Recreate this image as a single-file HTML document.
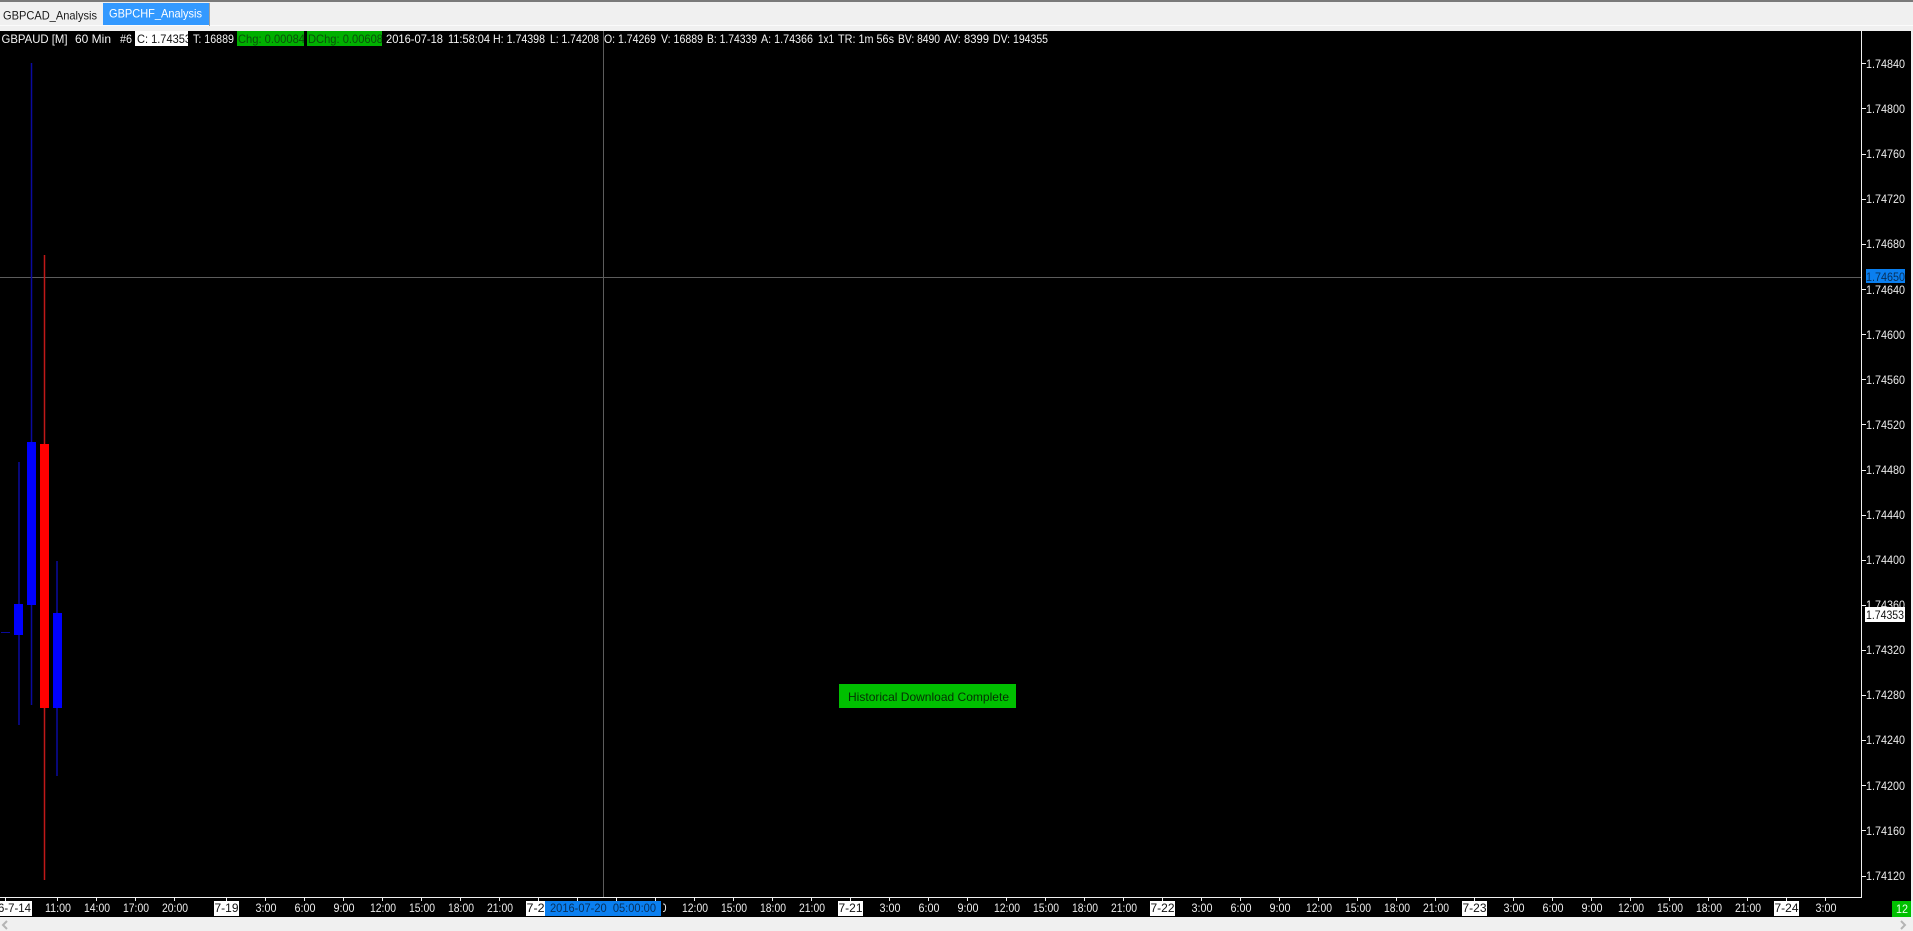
<!DOCTYPE html>
<html lang="en">
<head>
<meta charset="utf-8">
<title>GBPAUD Chart</title>
<style>
html,body{margin:0;padding:0;background:#f0f0f0;width:1913px;height:931px;overflow:hidden}
svg{display:block;position:absolute;left:0;top:0}
text{font-family:"Liberation Sans",sans-serif;font-size:12px;white-space:pre}
</style>
</head>
<body>
<svg width="1913" height="931" viewBox="0 0 1913 931" xmlns="http://www.w3.org/2000/svg">
<rect width="1913" height="931" fill="#f0f0f0"/>
<rect width="1913" height="2" fill="#7a7a7a"/>
<rect y="25" width="1913" height="1" fill="#fbfbfb"/>
<rect x="103" y="3" width="106" height="22" fill="#3399ff"/>
<rect x="209" y="3" width="1" height="23" fill="#a0a0a0"/>
<text x="3" y="19.500" textLength="94" lengthAdjust="spacingAndGlyphs" fill="#1a1a1a">GBPCAD_Analysis</text>
<text x="109" y="17.500" textLength="93" lengthAdjust="spacingAndGlyphs" fill="#ffffff">GBPCHF_Analysis</text>

<rect y="31" width="1911" height="886" fill="#000"/>

<!-- crosshair -->
<rect x="603" y="31" width="1" height="866" fill="#5c5c5c"/>
<rect x="0" y="277" width="1861" height="1" fill="#5c5c5c"/>

<!-- candles -->
<g>
<rect x="1" y="632" width="9" height="1" fill="#0a0a9a"/>
<rect x="18.250" y="462" width="1.500" height="263" fill="#0a0aa0"/>
<rect x="14" y="604" width="9" height="31" fill="#0000ff"/>
<rect x="30.750" y="63" width="1.500" height="642" fill="#0a0aa0"/>
<rect x="27" y="442" width="9" height="163" fill="#0000ff"/>
<rect x="43.750" y="255" width="1.500" height="625" fill="#c01818"/>
<rect x="40" y="444" width="9" height="264" fill="#ff0000"/>
<rect x="56.250" y="561" width="1.500" height="215" fill="#0a0aa0"/>
<rect x="53" y="613" width="9" height="95" fill="#0000ff"/>
</g>

<!-- header strip -->
<rect x="135" y="31" width="53" height="15" fill="#ffffff"/>
<rect x="237" y="31" width="67" height="15" fill="#00b000"/>
<rect x="307" y="31" width="75" height="15" fill="#00b000"/>
<g fill="#f4f4f4">
<text x="1.500" y="43" textLength="66" lengthAdjust="spacingAndGlyphs">GBPAUD [M]</text>
<text x="75" y="43" textLength="36" lengthAdjust="spacingAndGlyphs">60 Min</text>
<text x="120" y="43" textLength="12" lengthAdjust="spacingAndGlyphs">#6</text>
<text x="193" y="43" textLength="41" lengthAdjust="spacingAndGlyphs">T: 16889</text>
<text x="386" y="43" textLength="57" lengthAdjust="spacingAndGlyphs">2016-07-18</text>
<text x="448" y="43" textLength="42" lengthAdjust="spacingAndGlyphs">11:58:04</text>
<text x="493" y="43" textLength="52" lengthAdjust="spacingAndGlyphs">H: 1.74398</text>
<text x="550" y="43" textLength="49" lengthAdjust="spacingAndGlyphs">L: 1.74208</text>
<text x="604" y="43" textLength="52" lengthAdjust="spacingAndGlyphs">O: 1.74269</text>
<text x="661" y="43" textLength="42" lengthAdjust="spacingAndGlyphs">V: 16889</text>
<text x="707" y="43" textLength="50" lengthAdjust="spacingAndGlyphs">B: 1.74339</text>
<text x="761" y="43" textLength="52" lengthAdjust="spacingAndGlyphs">A: 1.74366</text>
<text x="818" y="43" textLength="16" lengthAdjust="spacingAndGlyphs">1x1</text>
<text x="838" y="43" textLength="56" lengthAdjust="spacingAndGlyphs">TR: 1m 56s</text>
<text x="898" y="43" textLength="42" lengthAdjust="spacingAndGlyphs">BV: 8490</text>
<text x="944" y="43" textLength="45" lengthAdjust="spacingAndGlyphs">AV: 8399</text>
<text x="993" y="43" textLength="55" lengthAdjust="spacingAndGlyphs">DV: 194355</text>
</g>
<text x="137" y="43" textLength="54" lengthAdjust="spacingAndGlyphs" fill="#111">C: 1.74353</text>
<rect x="188" y="31" width="4" height="15" fill="#000"/>
<text x="238" y="43" textLength="67" lengthAdjust="spacingAndGlyphs" fill="#0a500a">Chg: 0.00084</text>
<rect x="304" y="31" width="3" height="15" fill="#000"/>
<text x="308" y="43" textLength="75" lengthAdjust="spacingAndGlyphs" fill="#0a500a">DChg: 0.00608</text>
<rect x="382" y="31" width="4" height="15" fill="#000"/>

<!-- axes -->
<rect x="1861" y="31" width="1" height="867" fill="#f0f0f0"/>
<rect x="0" y="897" width="1862" height="1" fill="#f0f0f0"/>
<g fill="#f0f0f0">
<rect x="1862" y="63" width="4" height="1"/><rect x="1862" y="108" width="4" height="1"/><rect x="1862" y="154" width="4" height="1"/><rect x="1862" y="199" width="4" height="1"/><rect x="1862" y="244" width="4" height="1"/><rect x="1862" y="289" width="4" height="1"/><rect x="1862" y="334" width="4" height="1"/><rect x="1862" y="379" width="4" height="1"/><rect x="1862" y="424" width="4" height="1"/><rect x="1862" y="470" width="4" height="1"/><rect x="1862" y="515" width="4" height="1"/><rect x="1862" y="560" width="4" height="1"/><rect x="1862" y="605" width="4" height="1"/><rect x="1862" y="650" width="4" height="1"/><rect x="1862" y="695" width="4" height="1"/><rect x="1862" y="740" width="4" height="1"/><rect x="1862" y="785" width="4" height="1"/><rect x="1862" y="830" width="4" height="1"/><rect x="1862" y="876" width="4" height="1"/>
</g>
<g fill="#ececec">
<text x="1866" y="68" textLength="39" lengthAdjust="spacingAndGlyphs">1.74840</text>
<text x="1866" y="113" textLength="39" lengthAdjust="spacingAndGlyphs">1.74800</text>
<text x="1866" y="158" textLength="39" lengthAdjust="spacingAndGlyphs">1.74760</text>
<text x="1866" y="203" textLength="39" lengthAdjust="spacingAndGlyphs">1.74720</text>
<text x="1866" y="248" textLength="39" lengthAdjust="spacingAndGlyphs">1.74680</text>
<text x="1866" y="294" textLength="39" lengthAdjust="spacingAndGlyphs">1.74640</text>
<text x="1866" y="339" textLength="39" lengthAdjust="spacingAndGlyphs">1.74600</text>
<text x="1866" y="384" textLength="39" lengthAdjust="spacingAndGlyphs">1.74560</text>
<text x="1866" y="429" textLength="39" lengthAdjust="spacingAndGlyphs">1.74520</text>
<text x="1866" y="474" textLength="39" lengthAdjust="spacingAndGlyphs">1.74480</text>
<text x="1866" y="519" textLength="39" lengthAdjust="spacingAndGlyphs">1.74440</text>
<text x="1866" y="564" textLength="39" lengthAdjust="spacingAndGlyphs">1.74400</text>
<text x="1866" y="609" textLength="39" lengthAdjust="spacingAndGlyphs">1.74360</text>
<text x="1866" y="654" textLength="39" lengthAdjust="spacingAndGlyphs">1.74320</text>
<text x="1866" y="699" textLength="39" lengthAdjust="spacingAndGlyphs">1.74280</text>
<text x="1866" y="744" textLength="39" lengthAdjust="spacingAndGlyphs">1.74240</text>
<text x="1866" y="790" textLength="39" lengthAdjust="spacingAndGlyphs">1.74200</text>
<text x="1866" y="835" textLength="39" lengthAdjust="spacingAndGlyphs">1.74160</text>
<text x="1866" y="880" textLength="39" lengthAdjust="spacingAndGlyphs">1.74120</text>
</g>
<rect x="1866" y="269" width="39" height="14" fill="#0a7ff0"/>
<text x="1866" y="281" textLength="39" lengthAdjust="spacingAndGlyphs" fill="#08305a">1.74650</text>
<rect x="1865" y="607" width="40" height="15" fill="#ffffff"/>
<text x="1866" y="619" textLength="38" lengthAdjust="spacingAndGlyphs" fill="#111">1.74353</text>

<!-- bottom ticks -->
<g fill="#f0f0f0">
<rect x="5" y="898" width="1" height="3"/><rect x="57" y="898" width="1" height="3"/><rect x="96" y="898" width="1" height="3"/><rect x="135" y="898" width="1" height="3"/><rect x="174" y="898" width="1" height="3"/><rect x="226" y="898" width="1" height="3"/><rect x="265" y="898" width="1" height="3"/><rect x="304" y="898" width="1" height="3"/><rect x="343" y="898" width="1" height="3"/><rect x="382" y="898" width="1" height="3"/><rect x="421" y="898" width="1" height="3"/><rect x="460" y="898" width="1" height="3"/><rect x="499" y="898" width="1" height="3"/><rect x="538" y="898" width="1" height="3"/><rect x="577" y="898" width="1" height="3"/><rect x="616" y="898" width="1" height="3"/><rect x="655" y="898" width="1" height="3"/><rect x="694" y="898" width="1" height="3"/><rect x="733" y="898" width="1" height="3"/><rect x="772" y="898" width="1" height="3"/><rect x="811" y="898" width="1" height="3"/><rect x="850" y="898" width="1" height="3"/><rect x="889" y="898" width="1" height="3"/><rect x="928" y="898" width="1" height="3"/><rect x="967" y="898" width="1" height="3"/><rect x="1006" y="898" width="1" height="3"/><rect x="1045" y="898" width="1" height="3"/><rect x="1084" y="898" width="1" height="3"/><rect x="1123" y="898" width="1" height="3"/><rect x="1162" y="898" width="1" height="3"/><rect x="1201" y="898" width="1" height="3"/><rect x="1240" y="898" width="1" height="3"/><rect x="1279" y="898" width="1" height="3"/><rect x="1318" y="898" width="1" height="3"/><rect x="1357" y="898" width="1" height="3"/><rect x="1396" y="898" width="1" height="3"/><rect x="1435" y="898" width="1" height="3"/><rect x="1474" y="898" width="1" height="3"/><rect x="1513" y="898" width="1" height="3"/><rect x="1552" y="898" width="1" height="3"/><rect x="1591" y="898" width="1" height="3"/><rect x="1630" y="898" width="1" height="3"/><rect x="1669" y="898" width="1" height="3"/><rect x="1708" y="898" width="1" height="3"/><rect x="1747" y="898" width="1" height="3"/><rect x="1786" y="898" width="1" height="3"/><rect x="1825" y="898" width="1" height="3"/>
</g>

<!-- date boxes -->
<g fill="#ffffff">
<rect x="0" y="901" width="32" height="15"/>
<rect x="214" y="901" width="25" height="15"/>
<rect x="526" y="901" width="25" height="15"/>
<rect x="838" y="901" width="25" height="15"/>
<rect x="1150" y="901" width="25" height="15"/>
<rect x="1462" y="901" width="25" height="15"/>
<rect x="1774" y="901" width="25" height="15"/>
</g>
<g fill="#111" text-anchor="middle">
<text x="5" y="912" textLength="52" lengthAdjust="spacingAndGlyphs">2016-7-14</text>
<text x="226.500" y="912" textLength="24" lengthAdjust="spacingAndGlyphs">7-19</text>
<text x="539" y="912" textLength="25" lengthAdjust="spacingAndGlyphs">7-20</text>
<text x="850.500" y="912" textLength="24" lengthAdjust="spacingAndGlyphs">7-21</text>
<text x="1162.500" y="912" textLength="24" lengthAdjust="spacingAndGlyphs">7-22</text>
<text x="1474.500" y="912" textLength="24" lengthAdjust="spacingAndGlyphs">7-23</text>
<text x="1786.500" y="912" textLength="24" lengthAdjust="spacingAndGlyphs">7-24</text>
</g>
<g fill="#ececec" text-anchor="middle">
<text x="58" y="912" textLength="26" lengthAdjust="spacingAndGlyphs">11:00</text>
<text x="97" y="912" textLength="26" lengthAdjust="spacingAndGlyphs">14:00</text>
<text x="136" y="912" textLength="26" lengthAdjust="spacingAndGlyphs">17:00</text>
<text x="175" y="912" textLength="26" lengthAdjust="spacingAndGlyphs">20:00</text>
<text x="266" y="912" textLength="21" lengthAdjust="spacingAndGlyphs">3:00</text>
<text x="305" y="912" textLength="21" lengthAdjust="spacingAndGlyphs">6:00</text>
<text x="344" y="912" textLength="21" lengthAdjust="spacingAndGlyphs">9:00</text>
<text x="383" y="912" textLength="26" lengthAdjust="spacingAndGlyphs">12:00</text>
<text x="422" y="912" textLength="26" lengthAdjust="spacingAndGlyphs">15:00</text>
<text x="461" y="912" textLength="26" lengthAdjust="spacingAndGlyphs">18:00</text>
<text x="500" y="912" textLength="26" lengthAdjust="spacingAndGlyphs">21:00</text>
<text x="578" y="912" textLength="21" lengthAdjust="spacingAndGlyphs">3:00</text>
<text x="617" y="912" textLength="21" lengthAdjust="spacingAndGlyphs">6:00</text>
<text x="656" y="912" textLength="21" lengthAdjust="spacingAndGlyphs">9:00</text>
<text x="695" y="912" textLength="26" lengthAdjust="spacingAndGlyphs">12:00</text>
<text x="734" y="912" textLength="26" lengthAdjust="spacingAndGlyphs">15:00</text>
<text x="773" y="912" textLength="26" lengthAdjust="spacingAndGlyphs">18:00</text>
<text x="812" y="912" textLength="26" lengthAdjust="spacingAndGlyphs">21:00</text>
<text x="890" y="912" textLength="21" lengthAdjust="spacingAndGlyphs">3:00</text>
<text x="929" y="912" textLength="21" lengthAdjust="spacingAndGlyphs">6:00</text>
<text x="968" y="912" textLength="21" lengthAdjust="spacingAndGlyphs">9:00</text>
<text x="1007" y="912" textLength="26" lengthAdjust="spacingAndGlyphs">12:00</text>
<text x="1046" y="912" textLength="26" lengthAdjust="spacingAndGlyphs">15:00</text>
<text x="1085" y="912" textLength="26" lengthAdjust="spacingAndGlyphs">18:00</text>
<text x="1124" y="912" textLength="26" lengthAdjust="spacingAndGlyphs">21:00</text>
<text x="1202" y="912" textLength="21" lengthAdjust="spacingAndGlyphs">3:00</text>
<text x="1241" y="912" textLength="21" lengthAdjust="spacingAndGlyphs">6:00</text>
<text x="1280" y="912" textLength="21" lengthAdjust="spacingAndGlyphs">9:00</text>
<text x="1319" y="912" textLength="26" lengthAdjust="spacingAndGlyphs">12:00</text>
<text x="1358" y="912" textLength="26" lengthAdjust="spacingAndGlyphs">15:00</text>
<text x="1397" y="912" textLength="26" lengthAdjust="spacingAndGlyphs">18:00</text>
<text x="1436" y="912" textLength="26" lengthAdjust="spacingAndGlyphs">21:00</text>
<text x="1514" y="912" textLength="21" lengthAdjust="spacingAndGlyphs">3:00</text>
<text x="1553" y="912" textLength="21" lengthAdjust="spacingAndGlyphs">6:00</text>
<text x="1592" y="912" textLength="21" lengthAdjust="spacingAndGlyphs">9:00</text>
<text x="1631" y="912" textLength="26" lengthAdjust="spacingAndGlyphs">12:00</text>
<text x="1670" y="912" textLength="26" lengthAdjust="spacingAndGlyphs">15:00</text>
<text x="1709" y="912" textLength="26" lengthAdjust="spacingAndGlyphs">18:00</text>
<text x="1748" y="912" textLength="26" lengthAdjust="spacingAndGlyphs">21:00</text>
<text x="1826" y="912" textLength="21" lengthAdjust="spacingAndGlyphs">3:00</text>
</g>

<!-- crosshair time label -->
<rect x="545" y="901" width="116" height="15" fill="#0a7ff0"/>
<rect x="661" y="901" width="2" height="15" fill="#000"/>
<text x="550" y="912" textLength="106" lengthAdjust="spacingAndGlyphs" fill="#08305a">2016-07-20  05:00:00</text>

<!-- bars counter -->
<rect x="1892" y="901" width="19" height="16" fill="#00c000"/>
<text x="1896" y="913" textLength="12" lengthAdjust="spacingAndGlyphs" fill="#e8ffe8">12</text>

<!-- message -->
<rect x="839" y="684" width="177" height="24" fill="#00c000"/>
<text x="848" y="701" textLength="161" lengthAdjust="spacingAndGlyphs" fill="#053005">Historical Download Complete</text>

<!-- scroll chevrons -->
<path d="M7 921 L3 925 L7 929" fill="none" stroke="#b4b4b4" stroke-width="2"/>
<path d="M1901 921 L1905 925 L1901 929" fill="none" stroke="#b4b4b4" stroke-width="2"/>
</svg>
</body>
</html>
